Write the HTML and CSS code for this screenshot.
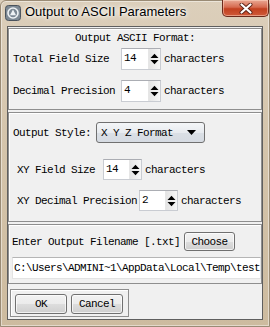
FILE: index.html
```html
<!DOCTYPE html>
<html lang="en">
<head>
  <meta charset="UTF-8">
  <title>Output to ASCII Parameters</title>
  <link rel="stylesheet" href="styles.css">
</head>
<body>
  <div class="window">
    <div class="titlebar">
      <svg class="app-icon" width="16" height="16" viewBox="0 0 16 16">
        <rect x="0.5" y="0.5" width="15" height="15" rx="3" fill="#7d8994" stroke="#4a535c"/>
        <circle cx="8" cy="8" r="5" fill="none" stroke="#eef2f5" stroke-width="1.6"/>
        <path d="M8 4.6 L11 10.2 L5 10.2 Z" fill="#eef2f5"/>
      </svg>
      <span class="title">Output to ASCII Parameters</span>
      <div class="close-btn">
        <svg width="14" height="11" viewBox="0 0 14 11">
          <path d="M2.5 1.5 L11.5 9.5 M11.5 1.5 L2.5 9.5" stroke="#5b2216" stroke-width="4" stroke-linecap="round"/>
          <path d="M2.5 1.5 L11.5 9.5 M11.5 1.5 L2.5 9.5" stroke="#fff" stroke-width="2.2" stroke-linecap="round"/>
        </svg>
      </div>
    </div>

    <div class="client">
      <!-- ascii format -->
      <div class="group group-format">
        <div class="group-title">Output ASCII Format:</div>
        <div class="field-grid">
          <span class="label">Total Field Size</span>
          <div class="spin">
            <span class="spin-value">14</span>
            <span class="spin-arrows">
              <svg width="9" height="12" viewBox="0 0 9 12"><path d="M0.5 5 L4.5 0.8 L8.5 5 Z M0.5 7 L8.5 7 L4.5 11.2 Z" fill="#000"/></svg>
            </span>
          </div>
          <span class="unit">characters</span>

          <span class="label">Decimal Precision</span>
          <div class="spin">
            <span class="spin-value">4</span>
            <span class="spin-arrows">
              <svg width="9" height="12" viewBox="0 0 9 12"><path d="M0.5 5 L4.5 0.8 L8.5 5 Z M0.5 7 L8.5 7 L4.5 11.2 Z" fill="#000"/></svg>
            </span>
          </div>
          <span class="unit">characters</span>
        </div>
      </div>

      <!-- output style -->
      <div class="group group-style">
        <div class="row row-style">
          <span class="label">Output Style:</span>
          <div class="select">
            <span>X Y Z Format</span>
            <svg width="9" height="5" viewBox="0 0 9 5"><path d="M0 0 L9 0 L4.5 5 Z" fill="#000"/></svg>
          </div>
        </div>
        <div class="row row-xy">
          <span class="label label-xy-size">XY Field Size</span>
          <div class="spin">
            <span class="spin-value">14</span>
            <span class="spin-arrows">
              <svg width="9" height="12" viewBox="0 0 9 12"><path d="M0.5 5 L4.5 0.8 L8.5 5 Z M0.5 7 L8.5 7 L4.5 11.2 Z" fill="#000"/></svg>
            </span>
          </div>
          <span class="unit">characters</span>
        </div>
        <div class="row row-xy row-xy-prec">
          <span class="label">XY Decimal Precision</span>
          <div class="spin">
            <span class="spin-value">2</span>
            <span class="spin-arrows">
              <svg width="9" height="12" viewBox="0 0 9 12"><path d="M0.5 5 L4.5 0.8 L8.5 5 Z M0.5 7 L8.5 7 L4.5 11.2 Z" fill="#000"/></svg>
            </span>
          </div>
          <span class="unit">characters</span>
        </div>
      </div>

      <!-- filename -->
      <div class="group group-file">
        <div class="row row-file">
          <span class="label">Enter Output Filename [.txt]</span>
          <button class="btn btn-choose">Choose</button>
        </div>
        <div class="path-input">C:\Users\ADMINI~1\AppData\Local\Temp\test</div>
      </div>

      <div class="group group-buttons">
        <button class="btn btn-ok">OK</button>
        <button class="btn btn-cancel">Cancel</button>
      </div>
    </div>
  </div>
</body>
</html>
```

FILE: styles.css
```css
html, body {
  margin: 0;
  padding: 0;
}

body {
  width: 270px;
  height: 327px;
  overflow: hidden;
  background: linear-gradient(180deg, #dccfbb 0%, #d5c5ac 40%, #cdbb9f 100%);
  font-family: "Liberation Mono", monospace;
  font-size: 11px;
  letter-spacing: -0.6px;
  color: #000;
}

.window {
  width: 270px;
  height: 327px;
  display: flex;
  flex-direction: column;
  box-sizing: border-box;
  border: 1px solid #9a8b75;
  border-radius: 6px 6px 0 0;
  box-shadow: inset 0 0 0 1px rgba(255, 255, 255, 0.45);
}

/* title bar */
.titlebar {
  height: 25px;
  display: flex;
  align-items: flex-start;
  flex-shrink: 0;
}

.app-icon {
  margin: 4px 0 0 4px;
  flex-shrink: 0;
}

.title {
  margin: 3px 0 0 4px;
  font-family: "Liberation Sans", sans-serif;
  font-size: 13px;
  letter-spacing: 0;
  line-height: 16px;
  color: #000;
  text-shadow: 0 0 6px #fff, 0 0 4px #fff, 0 0 2px #f6efe4;
}

.close-btn {
  margin: -1px 0 0 auto;
  width: 47px;
  height: 17px;
  display: flex;
  align-items: center;
  justify-content: center;
  box-sizing: border-box;
  border: 1px solid #6b2a1c;
  border-top: none;
  border-radius: 0 0 5px 5px;
  background: linear-gradient(180deg, #e9a893 0%, #d66a4f 45%, #c2401f 55%, #cf5a3a 100%);
  box-shadow: inset 0 0 0 1px rgba(255, 220, 200, 0.5);
}

/* client area */
.client {
  margin: 0 6px 6px 6px;
  flex: 1;
  box-sizing: border-box;
  border: 1px solid #5f5f5f;
  background: #f0f0f0;
  padding: 1px 0 0 0;
}

.group {
  box-sizing: border-box;
  border: 1px solid #8e8e8e;
  box-shadow: inset 1px 1px 0 #fff;
  margin: 0 0 2px 0;
}

.label, .unit, .spin-value, .select span {
  white-space: nowrap;
  line-height: 12px;
}

.group-format {
  height: 82px;
  padding: 3px 0 0 4px;
}

.group-title {
  text-align: center;
  line-height: 12px;
  padding-right: 4px;
}

.field-grid {
  margin-top: 4px;
  display: grid;
  grid-template-columns: 105px 40px auto;
  grid-auto-rows: 22px;
  row-gap: 10px;
  column-gap: 3px;
  align-items: center;
}

.spin {
  display: flex;
  width: 40px;
  height: 22px;
  box-sizing: border-box;
  border: 1px solid #c9ccd2;
  border-top-color: #abadb3;
  background: #fff;
}

.spin-value {
  flex: 1;
  padding: 3px 0 0 2px;
}

.spin-arrows {
  width: 11px;
  display: flex;
  align-items: center;
  justify-content: center;
  background: linear-gradient(90deg, #e4e4e4, #f6f6f6);
  border-left: 1px solid #e6e6e6;
}

.group-style {
  height: 110px;
  padding: 9px 0 0 4px;
}

.row {
  display: flex;
  align-items: center;
}

.row-style {
  height: 21px;
}

.select {
  margin-left: 5px;
  width: 109px;
  height: 21px;
  box-sizing: border-box;
  display: flex;
  align-items: center;
  justify-content: space-between;
  padding: 0 8px 0 4px;
  border: 1px solid #707070;
  border-radius: 3px;
  background: linear-gradient(180deg, #f4f6f8 0%, #e8ebef 50%, #dadfe5 51%, #d6dbe2 100%);
}

.row-xy {
  margin-top: 16px;
  height: 21px;
  padding-left: 4px;
}

.row-xy .spin {
  height: 21px;
  width: 39px;
  margin-right: 3px;
}

.label-xy-size {
  width: 86px;
}

.row-xy-prec {
  margin-top: 10px;
}

.row-xy-prec .label {
  margin-right: 2px;
}

.group-file {
  height: 60px;
  padding: 7px 0 0 3px;
}

.btn {
  font-family: "Liberation Mono", monospace;
  font-size: 11px;
  letter-spacing: -0.6px;
  color: #000;
  padding: 0;
  box-sizing: border-box;
  border: 1px solid #707070;
  border-radius: 3px;
  background: linear-gradient(180deg, #f2f2f2 0%, #ebebeb 50%, #dddddd 51%, #cfcfcf 100%);
  box-shadow: inset 0 0 0 1px rgba(255, 255, 255, 0.7);
}

.btn-choose {
  margin-left: 4px;
  width: 51px;
  height: 19px;
}

.path-input {
  margin-top: 6px;
  width: 249px;
  height: 22px;
  box-sizing: border-box;
  padding: 4px 0 0 1px;
  line-height: 12px;
  white-space: nowrap;
  background: #fff;
  border: 1px solid #e3e3e3;
  border-top-color: #b5b5b5;
}

.group-buttons {
  margin: 5px 0 0 2px;
  width: 119px;
  height: 28px;
  display: flex;
  gap: 4px;
  padding: 4px 0 0 4px;
}

.btn-ok, .btn-cancel {
  width: 52px;
  height: 20px;
}
```
